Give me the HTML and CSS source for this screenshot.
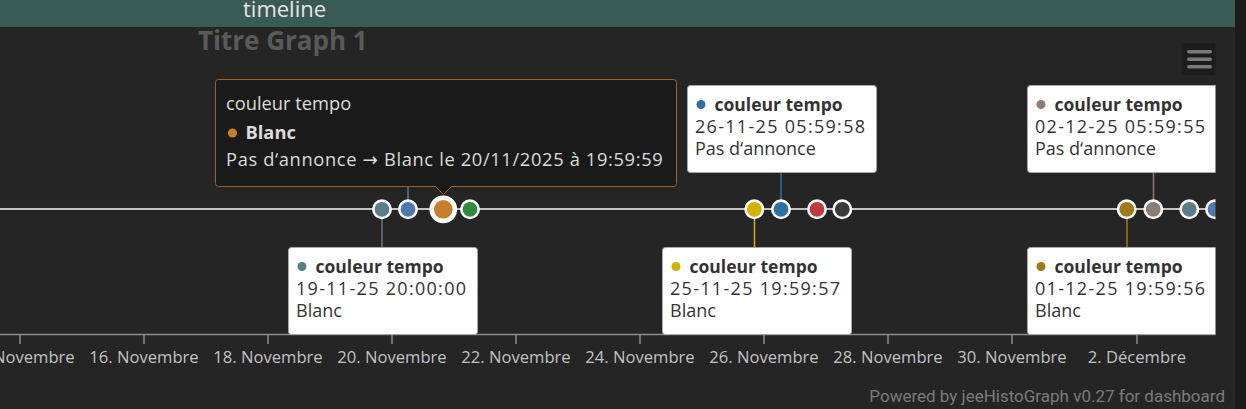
FILE: index.html
```html
<!DOCTYPE html>
<html lang="fr">
<head>
    <meta charset="UTF-8">
    <title>timeline</title>
    <link rel="stylesheet" href="styles.css">
</head>
<body>

    <div class="panel">
        <div class="panel-head">timeline</div>

        <div class="chart">
            <svg class="chart-svg" width="1235" height="382" viewBox="0 27 1235 382">
                <defs>
                    <clipPath id="plot-clip">
                        <rect x="0" y="27" width="1215.5" height="382"></rect>
                    </clipPath>
                </defs>

                <text class="chart-title" x="198" y="50">Titre Graph 1</text>

                <!-- menu button -->
                <rect class="menu-btn" x="1181.5" y="43" width="34" height="32" rx="2"></rect>
                <rect class="menu-bar" x="1187" y="50" width="25" height="3.6" rx="1.8"></rect>
                <rect class="menu-bar" x="1187" y="57.4" width="25" height="3.6" rx="1.8"></rect>
                <rect class="menu-bar" x="1187" y="65" width="25" height="3.6" rx="1.8"></rect>

                <!-- x axis -->
                <line class="axis-line" x1="0" y1="334.5" x2="1215" y2="334.5"></line>
                <g class="ticks">
                    <line x1="20" y1="334" x2="20" y2="344"></line>
                    <line x1="144" y1="334" x2="144" y2="344"></line>
                    <line x1="268" y1="334" x2="268" y2="344"></line>
                    <line x1="392" y1="334" x2="392" y2="344"></line>
                    <line x1="516" y1="334" x2="516" y2="344"></line>
                    <line x1="640" y1="334" x2="640" y2="344"></line>
                    <line x1="764" y1="334" x2="764" y2="344"></line>
                    <line x1="888" y1="334" x2="888" y2="344"></line>
                    <line x1="1012" y1="334" x2="1012" y2="344"></line>
                    <line x1="1137" y1="334" x2="1137" y2="344"></line>
                </g>
                <g class="axis-labels">
                    <text x="20" y="363">14. Novembre</text>
                    <text x="144" y="363">16. Novembre</text>
                    <text x="268" y="363">18. Novembre</text>
                    <text x="392" y="363">20. Novembre</text>
                    <text x="516" y="363">22. Novembre</text>
                    <text x="640" y="363">24. Novembre</text>
                    <text x="764" y="363">26. Novembre</text>
                    <text x="888" y="363">28. Novembre</text>
                    <text x="1012" y="363">30. Novembre</text>
                    <text x="1137" y="363">2. Décembre</text>
                </g>

                <g clip-path="url(#plot-clip)">
                    <line class="timeline-line" x1="0" y1="209" x2="1215" y2="209"></line>

                    <!-- connectors -->
                    <line class="conn" x1="382" y1="215" x2="382" y2="247" stroke="#5b7d87"></line>
                    <line class="conn" x1="408" y1="187" x2="408" y2="203" stroke="#4d78b3"></line>
                    <line class="conn" x1="754.5" y1="215" x2="754.5" y2="247" stroke="#d4b300"></line>
                    <line class="conn" x1="781" y1="173" x2="781" y2="203" stroke="#2f6fa5"></line>
                    <line class="conn" x1="1127" y1="215" x2="1127" y2="247" stroke="#a07918"></line>
                    <line class="conn" x1="1153.5" y1="173" x2="1153.5" y2="203" stroke="#8a7d77"></line>

                    <!-- points -->
                    <circle class="pt" cx="382" cy="209.3" r="8.7" fill="#5b7d87"></circle>
                    <circle class="pt" cx="408" cy="209.3" r="8.7" fill="#4d78b3"></circle>
                    <circle class="pt pt-hover" cx="443.3" cy="209.3" r="11.6" fill="#c67f28"></circle>
                    <circle class="pt" cx="470" cy="209.3" r="8.7" fill="#2e8b3e"></circle>
                    <circle class="pt" cx="754.3" cy="209.3" r="8.7" fill="#d4b300"></circle>
                    <circle class="pt" cx="781" cy="209.3" r="8.7" fill="#2f6fa5"></circle>
                    <circle class="pt" cx="817" cy="209.3" r="8.7" fill="#c0393f"></circle>
                    <circle class="pt" cx="842.3" cy="209.3" r="8.7" fill="#3a3a3a"></circle>
                    <circle class="pt" cx="1126.7" cy="209.3" r="8.7" fill="#a07918"></circle>
                    <circle class="pt" cx="1153.3" cy="209.3" r="8.7" fill="#8a7d77"></circle>
                    <circle class="pt" cx="1189.3" cy="209.3" r="8.7" fill="#5b7d87"></circle>
                    <circle class="pt" cx="1215" cy="209.3" r="8.7" fill="#4d78b3"></circle>

                    <!-- data labels -->
                    <g class="label" transform="translate(687.5 85.5)">
                        <rect width="189" height="87" rx="3"></rect>
                        <circle cx="13.5" cy="19" r="4.5" fill="#2f6fa5"></circle>
                        <text class="label-head" x="27" y="25">couleur tempo</text>
                        <text class="label-date" x="7.5" y="47">26-11-25 05:59:58</text>
                        <text class="label-text" x="7.5" y="69">Pas d‘annonce</text>
                    </g>
                    <g class="label" transform="translate(1027.5 85.5)">
                        <rect width="195" height="87" rx="3"></rect>
                        <circle cx="13.5" cy="19" r="4.5" fill="#8a7d77"></circle>
                        <text class="label-head" x="27" y="25">couleur tempo</text>
                        <text class="label-date" x="7.5" y="47">02-12-25 05:59:55</text>
                        <text class="label-text" x="7.5" y="69">Pas d‘annonce</text>
                    </g>
                    <g class="label" transform="translate(288.5 247.5)">
                        <rect width="189" height="87" rx="3"></rect>
                        <circle cx="13.5" cy="19" r="4.5" fill="#5b7d87"></circle>
                        <text class="label-head" x="27" y="25">couleur tempo</text>
                        <text class="label-date" x="7.5" y="47">19-11-25 20:00:00</text>
                        <text class="label-text" x="7.5" y="69">Blanc</text>
                    </g>
                    <g class="label" transform="translate(662.5 247.5)">
                        <rect width="189" height="87" rx="3"></rect>
                        <circle cx="13.5" cy="19" r="4.5" fill="#d4b300"></circle>
                        <text class="label-head" x="27" y="25">couleur tempo</text>
                        <text class="label-date" x="7.5" y="47">25-11-25 19:59:57</text>
                        <text class="label-text" x="7.5" y="69">Blanc</text>
                    </g>
                    <g class="label" transform="translate(1027.5 247.5)">
                        <rect width="195" height="87" rx="3"></rect>
                        <circle cx="13.5" cy="19" r="4.5" fill="#a07918"></circle>
                        <text class="label-head" x="27" y="25">couleur tempo</text>
                        <text class="label-date" x="7.5" y="47">01-12-25 19:59:56</text>
                        <text class="label-text" x="7.5" y="69">Blanc</text>
                    </g>
                </g>

                <!-- tooltip -->
                <g class="tooltip" transform="translate(215.5 79.5)">
                    <path d="M3 0 H458 A3 3 0 0 1 461 3 V104 A3 3 0 0 1 458 107 H236 L228 115 L220 107 H3 A3 3 0 0 1 0 104 V3 A3 3 0 0 1 3 0 Z"></path>
                    <text class="tip-head" x="10.5" y="30">couleur tempo</text>
                    <circle cx="17" cy="53.5" r="4.6" fill="#c67f28"></circle>
                    <text class="tip-name" x="30" y="59">Blanc</text>
                    <text class="tip-text" x="10.5" y="86.5">Pas d‘annonce <tspan class="arrow">→</tspan> Blanc le 20/11/2025 à 19:59:59</text>
                </g>

                <text class="credits" x="1225" y="402">Powered by jeeHistoGraph v0.27 for dashboard</text>
            </svg>
        </div>
    </div>

</body>
</html>
```

FILE: styles.css
```css
body {
    margin: 0;
    padding: 0;
    background-color: #1b1b1b;
    font-family: 'Open Sans', 'Noto Sans', sans-serif;
    overflow: hidden;
}

.panel {
    width: 1235px;
    height: 409px;
    background-color: #252525;
}

.panel-head {
    height: 27px;
    line-height: 17px;
    padding-left: 243px;
    background-color: #3a5a54;
    color: #e6e6e6;
    font-size: 22px;
    overflow: hidden;
}

.chart-svg {
    display: block;
}

.chart-title {
    font-size: 26px;
    font-weight: bold;
    fill: #5a5a5a;
}

.menu-btn {
    fill: #1c1c1c;
}

.menu-bar {
    fill: #7a7a7a;
}

.axis-line {
    stroke: #8c8c8c;
    stroke-width: 1.5;
}

.ticks line {
    stroke: #8c8c8c;
    stroke-width: 1.5;
}

.axis-labels text {
    font-size: 16.6px;
    fill: #c2c2c2;
    text-anchor: middle;
}

.timeline-line {
    stroke: #c4c4c4;
    stroke-width: 2;
}

.conn {
    stroke-width: 1.5;
}

.pt {
    stroke: #fff;
    stroke-width: 2.6;
}

.pt-hover {
    stroke-width: 4.6;
}

.label rect {
    fill: #fff;
    stroke: #a8a8a8;
    stroke-width: 1;
}

.label text {
    font-size: 18px;
    fill: #333;
}

.label .label-head {
    font-size: 17.5px;
    font-weight: bold;
}

.label .label-date {
    letter-spacing: 1.3px;
}

.tooltip path {
    fill: #1a1a1a;
    stroke: #a0621f;
    stroke-width: 1;
}

.tooltip text {
    font-size: 18.3px;
    fill: #dcdcdc;
}

.tooltip .tip-name {
    font-weight: bold;
}

.tooltip .tip-text {
    letter-spacing: 0.65px;
}

.tooltip .arrow {
    font-family: 'DejaVu Sans', sans-serif;
}

.credits {
    font-family: Roboto, sans-serif;
    font-size: 17px;
    fill: #7c7c7c;
    text-anchor: end;
}
```
